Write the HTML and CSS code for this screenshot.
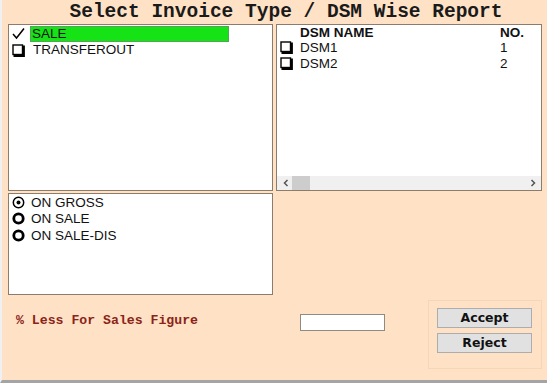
FILE: index.html
```html
<!DOCTYPE html>
<html lang="en">
<head>
  <meta charset="UTF-8" />
  <title>Select Invoice Type / DSM Wise Report</title>
  <link rel="stylesheet" href="styles.css">
</head>
<body>
  <main class="window">
    <h1 class="title">Select Invoice Type / DSM Wise Report</h1>

    <section class="top">
      <ul class="box list">
        <li class="row">
          <svg class="ico" viewBox="0 0 13 13" aria-hidden="true"><path d="M1 7 L4.5 11 L12 1.5" fill="none" stroke="#000" stroke-width="1.5"/></svg>
          <span class="item selected">SALE</span>
        </li>
        <li class="row">
          <svg class="ico" viewBox="0 0 13 13" aria-hidden="true"><rect x="1" y="1" width="9.5" height="9.5" fill="#fff" stroke="#000" stroke-width="1.4"/><path d="M11.8 1.5 V11.8 H1.5" fill="none" stroke="#000" stroke-width="2.2"/></svg>
          <span class="item">TRANSFEROUT</span>
        </li>
      </ul>

      <div class="box grid-box">
        <div class="table">
          <div class="trow head">
            <span class="cb"></span>
            <span class="name">DSM NAME</span>
            <span class="no">NO.</span>
          </div>
          <div class="trow">
            <svg class="ico" viewBox="0 0 13 13" aria-hidden="true"><rect x="1" y="1" width="9.5" height="9.5" fill="#fff" stroke="#000" stroke-width="1.4"/><path d="M11.8 1.5 V11.8 H1.5" fill="none" stroke="#000" stroke-width="2.2"/></svg>
            <span class="name">DSM1</span>
            <span class="no">1</span>
          </div>
          <div class="trow">
            <svg class="ico" viewBox="0 0 13 13" aria-hidden="true"><rect x="1" y="1" width="9.5" height="9.5" fill="#fff" stroke="#000" stroke-width="1.4"/><path d="M11.8 1.5 V11.8 H1.5" fill="none" stroke="#000" stroke-width="2.2"/></svg>
            <span class="name">DSM2</span>
            <span class="no">2</span>
          </div>
        </div>
        <div class="hscroll">
          <svg class="arrow" viewBox="0 0 8 8" aria-hidden="true"><path d="M5.5 1 L2.5 4 L5.5 7" fill="none" stroke="#555" stroke-width="1.5"/></svg>
          <span class="thumb"></span>
          <span class="track"></span>
          <svg class="arrow" viewBox="0 0 8 8" aria-hidden="true"><path d="M2.5 1 L5.5 4 L2.5 7" fill="none" stroke="#555" stroke-width="1.5"/></svg>
        </div>
      </div>
    </section>

    <section class="box radios">
      <label class="row">
        <svg class="ico" viewBox="0 0 13 13" aria-hidden="true"><circle cx="6.5" cy="6.5" r="5.2" fill="#fff" stroke="#000" stroke-width="1.5"/><circle cx="6.5" cy="6.5" r="2" fill="#000"/></svg>
        <span>ON GROSS</span>
      </label>
      <label class="row">
        <svg class="ico" viewBox="0 0 13 13" aria-hidden="true"><circle cx="6.5" cy="6.5" r="4.7" fill="#fff" stroke="#000" stroke-width="2.8"/></svg>
        <span>ON SALE</span>
      </label>
      <label class="row">
        <svg class="ico" viewBox="0 0 13 13" aria-hidden="true"><circle cx="6.5" cy="6.5" r="4.7" fill="#fff" stroke="#000" stroke-width="2.8"/></svg>
        <span>ON SALE-DIS</span>
      </label>
    </section>

    <section class="bottom">
      <label class="less" for="less">% Less For Sales Figure</label>
      <input id="less" class="field" type="text" />
      <div class="actions">
        <button class="btn" type="button">Accept</button>
        <button class="btn" type="button">Reject</button>
      </div>
    </section>
  </main>
</body>
</html>
```

FILE: styles.css
```css
:root{
  --peach:#ffe2c6;
  --edge:#8c7c6c;
  --text:#111;
}

* { box-sizing: border-box; }
html, body { margin:0; padding:0; }
body{
  width:547px; height:383px; overflow:hidden;
  background:var(--peach);
  font-family:"Liberation Sans", Arial, sans-serif;
  color:var(--text);
}

.window{
  height:383px;
  border-left:2px solid #eef0f2;
  border-bottom:3px solid #a4a4a4;
  padding-left:6px;
}

.title{
  margin:0; height:24px;
  font:bold 19.5px/25px "Liberation Mono", "Courier New", monospace;
  color:#1a1a1a;
  text-align:center;
  padding-left:17px;
}

.box{
  background:#fff;
  border:1px solid var(--edge);
}

.top{
  display:grid;
  grid-template-columns:265px 266px;
  gap:3px;
  height:167px;
}

/* list of invoice types */
.list{ margin:0; padding:0 0 0 3px; list-style:none; }
.row{
  display:flex; align-items:center; gap:6px;
  height:16px; font-size:13.5px;
}
.list .row:first-child{ height:17px; }
.ico{ width:13px; height:13px; flex:none; }
.item{ padding:0 2px; line-height:16px; }
.item.selected{
  width:199px;
  margin-left:-1px;
  background:#16e316;
  box-shadow:inset 0 0 0 1px #56a456;
}

/* dsm grid */
.grid-box{ display:flex; flex-direction:column; }
.table{ flex:1; padding-left:3px; }
.trow{
  display:flex; align-items:center;
  height:16.5px; font-size:13.5px;
}
.trow .cb{ width:13px; }
.trow .name{ width:200px; margin-left:7px; }
.trow .no{ flex:1; }
.trow.head{ font-weight:bold; height:14px; }

.hscroll{
  display:flex; align-items:center;
  height:14px; background:#f0f0f0;
  padding:0 4px 0 5px;
}
.arrow{ width:8px; height:8px; flex:none; }
.thumb{ width:18px; height:14px; background:#cdcdcd; margin-left:2px; }
.track{ flex:1; }

/* radios */
.radios{
  width:265px; height:102px;
  margin-top:2px;
  padding:0 0 0 3px;
}
.radios .row{ height:16.5px; }

/* bottom */
.bottom{
  display:flex; align-items:flex-start;
  padding-left:8px;
}
.less{
  width:284px;
  margin-top:18px;
  font:bold 13.2px/16px "Liberation Mono", "Courier New", monospace;
  color:#8b2418;
}
.field{
  width:85px; height:17px;
  margin-top:19px;
  border:1px solid #8e8a84;
  background:#fff;
  padding:0;
}
.actions{
  margin:5px 0 0 43px;
  width:114px; height:69px;
  border:1px solid #f6d6b6;
  display:flex; flex-direction:column; gap:5px;
  padding:7px 0 0 8px;
}
.btn{
  width:95px; height:20px;
  background:#e1e1e1;
  border:1px solid #adadad;
  font:bold 12.5px/16px "DejaVu Sans", Tahoma, sans-serif;
  color:#111;
  padding:0;
}
```
